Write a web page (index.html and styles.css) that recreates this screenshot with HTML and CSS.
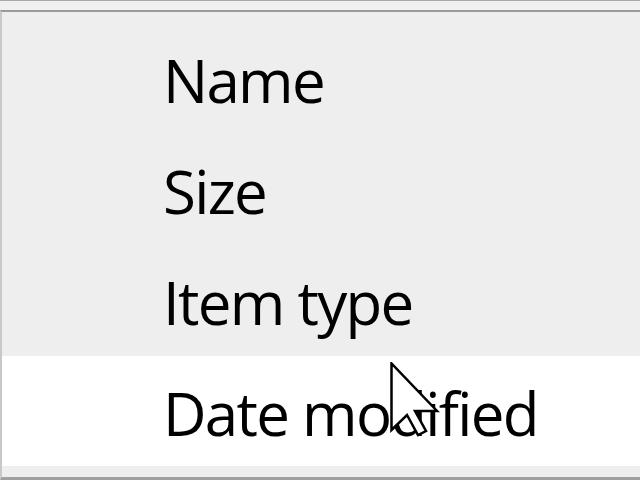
FILE: index.html
```html
<!DOCTYPE html>
<html>
<head>
<meta charset="utf-8">
<link rel="stylesheet" href="styles.css">
</head>
<body>
<div class="topbar"></div>
<div class="menu">
  <div class="item">Name</div>
  <div class="item">Size</div>
  <div class="item">Item type</div>
  <div class="item hover">Date modified</div>
</div>
<svg class="cursor" width="60" height="80" viewBox="0 0 60 80">
  <path d="M1.5 1.5 L1.5 68 L17 53 L28 73 L36 69 L25 49 L47 49 Z" fill="#fff" stroke="#000" stroke-width="2.5" stroke-linejoin="miter"/>
</svg>
</body>
</html>
```
FILE: styles.css
```css
html, body {
  margin: 0;
  padding: 0;
  width: 640px;
  height: 480px;
  overflow: hidden;
  background: #f0f0f0;
  position: relative;
}
.topbar {
  height: 9px;
  border-top: 1px solid #a8a8a8;
  background: #f0f0f0;
}
.menu {
  border-top: 2px solid #9a9a9a;
  border-left: 2px solid #c8c8c8;
  border-bottom: 3px solid #a0a0a0;
  background: #eeeeee;
  padding: 11px 0 10px 0;
  height: 444px;
}
.item {
  height: 111px;
  box-sizing: border-box;
  padding-left: 161px;
  padding-top: 2px;
  line-height: 111px;
  font-family: "Open Sans", "Noto Sans", sans-serif;
  font-size: 60px;
  letter-spacing: -1.7px;
  color: #000;
}
.item.hover {
  background: #ffffff;
  height: 110px;
}
.cursor {
  position: absolute;
  left: 390px;
  top: 362px;
}
```
